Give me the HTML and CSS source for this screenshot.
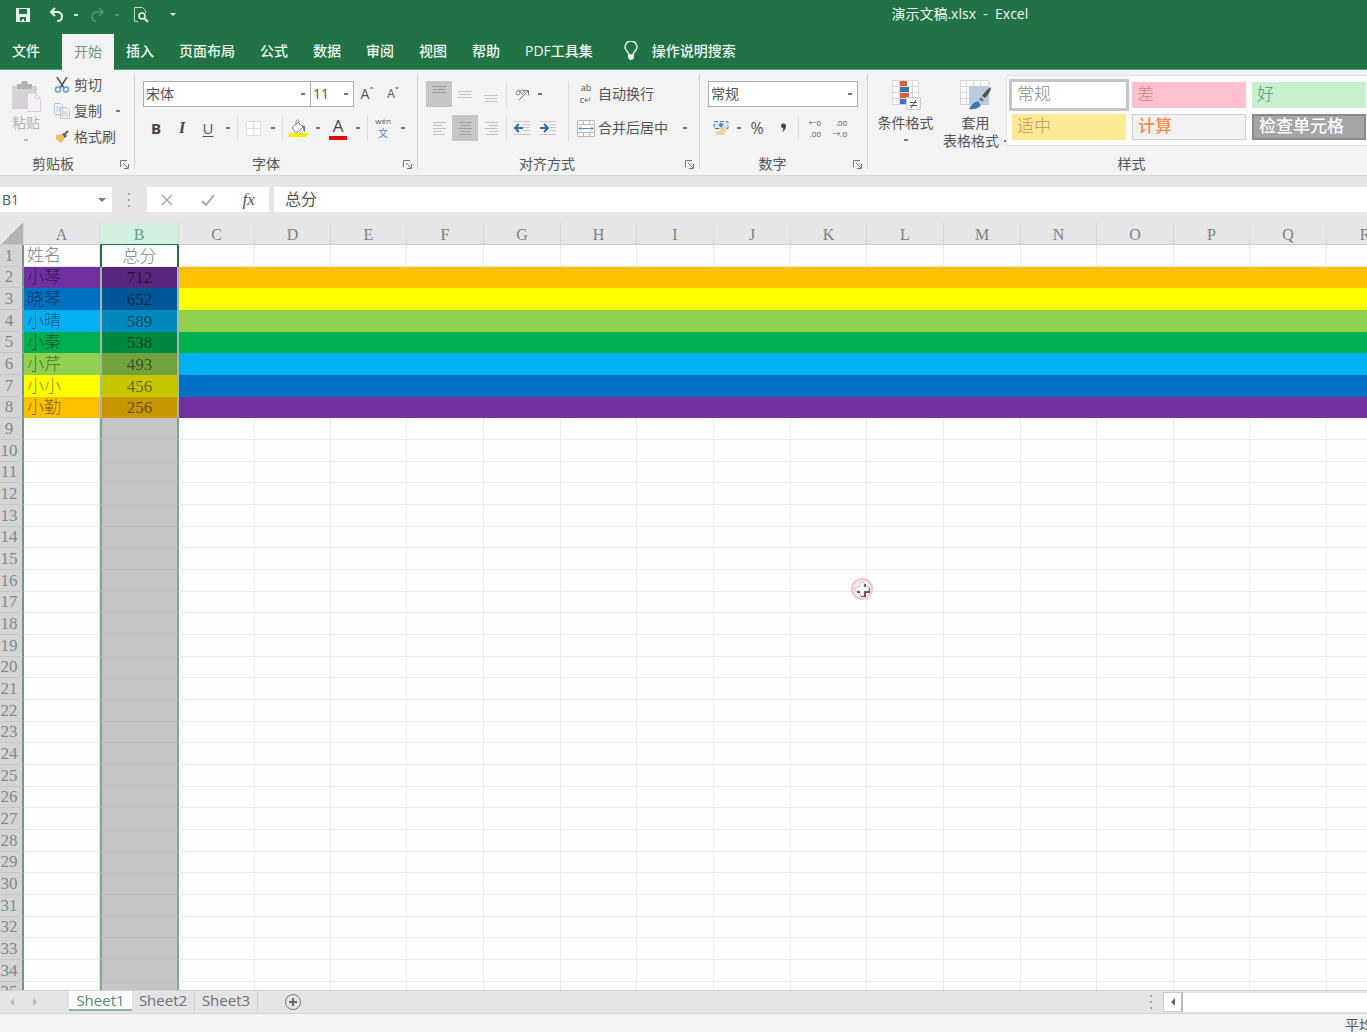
FILE: index.html
```html
<!DOCTYPE html>
<html lang="zh-CN">
<head>
<meta charset="utf-8">
<title>演示文稿.xlsx - Excel</title>
<link rel="stylesheet" href="styles.css">
</head>
<body>
<header class="titlebar">
  <div class="quick">
    <button class="quick-btn" aria-label="保存"><svg width="14" height="14" viewBox="0 0 14 14"><path fill="#e8f3ec" fill-rule="evenodd" d="M0 0h14v14H0zM3 1v5h8V1zM4 9v4h2v-2h2v2h2V9z"/></svg></button>
    <button class="quick-btn wide" aria-label="撤消"><svg width="15" height="15" viewBox="0 0 15 15"><path fill="none" stroke="#e8f3ec" stroke-width="2" d="M6 1 2 5l4 4M2 5h6q5 0 5 4.500T8 14"/></svg><i class="caret light"></i></button>
    <button class="quick-btn wide faded" aria-label="恢复"><svg width="15" height="15" viewBox="0 0 15 15"><path fill="none" stroke="#e8f3ec" stroke-width="1.500" d="m9 1 4 4-4 4M13 5H7q-5 0-5 4.500T6 14"/></svg><i class="caret light"></i></button>
    <button class="quick-btn preview" aria-label="打印预览"><svg width="16" height="16" viewBox="0 0 16 16"><path fill="none" stroke="#b9d9c5" d="M5 14.500H1.500v-14h8l3 3V6"/><circle cx="9" cy="9" r="3" fill="none" stroke="#e8f3ec" stroke-width="1.500"/><path stroke="#e8f3ec" stroke-width="2" d="m11 11 4 4"/></svg></button>
    <button class="quick-btn preview" aria-label="自定义快速访问工具栏"><i class="caret light big"></i></button>
  </div>
  <div class="doc-name">演示文稿.xlsx&nbsp; -&nbsp; Excel</div>
</header>
<nav class="tabs">
  <a href="#" class="tab file">文件</a>
  <a href="#" class="tab active">开始</a>
  <a href="#" class="tab">插入</a>
  <a href="#" class="tab">页面布局</a>
  <a href="#" class="tab">公式</a>
  <a href="#" class="tab">数据</a>
  <a href="#" class="tab">审阅</a>
  <a href="#" class="tab">视图</a>
  <a href="#" class="tab">帮助</a>
  <a href="#" class="tab">PDF工具集</a>
  <a href="#" class="tab tell"><svg width="14" height="20" viewBox="0 0 14 20"><path fill="none" stroke="#e8f3ec" stroke-width="1.500" d="M5 14c0-3-4-4-4-8a6 6 0 0 1 12 0c0 4-4 5-4 8z"/><path fill="#e8f3ec" d="M4 14h6v3l-2 2H6l-2-2z"/></svg>操作说明搜索</a>
</nav>

<section class="ribbon" aria-label="开始">
  <div class="group clipboard">
    <div class="body">
      <button class="paste"><svg width="30" height="31" viewBox="0 0 30 31"><path fill="#d6d0d6" d="M1 5h25v23H1z"/><path fill="#b5b1b5" d="M6 3h4a3.500 3.500 0 0 1 7 0h4v5H6z"/><path fill="#f5eff6" stroke="#dccfe0" d="M16.500 12.500h8l5 5v13h-13z"/><path fill="none" stroke="#dccfe0" d="M24.500 12.500v5h5"/></svg><span>粘贴</span><i class="caret pale"></i></button>
      <div class="stack">
        <button class="line"><svg width="16" height="16" viewBox="0 0 16 16"><path stroke="#555" stroke-width="1.500" d="m3 0 7 11M13 0 6 11"/><circle cx="4" cy="12.500" r="2.500" fill="none" stroke="#6c9ac6" stroke-width="1.500"/><circle cx="12" cy="12.500" r="2.500" fill="none" stroke="#6c9ac6" stroke-width="1.500"/></svg>剪切</button>
        <button class="line"><svg width="16" height="16" viewBox="0 0 16 16"><path fill="#f2f6fb" stroke="#b4c9df" d="M.5.5h6l2 2v9h-8zM6.500 4.500h6l3 3v8h-9z"/><path stroke="#b4c9df" d="M2 4h4M2 6h4M2 8h4M8 9h5M8 11h6M8 13h6"/></svg>复制<i class="caret"></i></button>
        <button class="line"><svg width="16" height="16" viewBox="0 0 16 16"><path fill="#f0bd68" d="m2 6 6-1 3 4-4 5-5-4z"/><path fill="#5a5a5a" d="m8 5 2-1 3 3-2 2z"/><path stroke="#5a5a5a" stroke-width="2" d="m11 5 3-3"/></svg>格式刷</button>
      </div>
    </div>
    <div class="caption">剪贴板<button class="launch" aria-label="剪贴板设置"><svg width="9" height="9" viewBox="0 0 9 9"><path fill="none" stroke="#777" d="M.5 7V.5H7M3 3l5 5M8.500 4v4.500H4"/></svg></button></div>
  </div>

  <div class="group font">
    <div class="body rows">
      <div class="row">
        <label class="combo family"><select aria-label="字体"><option>宋体</option></select><i class="caret"></i></label>
        <label class="combo size"><select aria-label="字号"><option>11</option></select><i class="caret"></i></label>
        <button class="tool grow" aria-label="增大字号">A<sup>ˆ</sup></button>
        <button class="tool grow less" aria-label="减小字号">A<sup>ˇ</sup></button>
      </div>
      <div class="row">
        <button class="tool bold">B</button><button class="tool italic">I</button><button class="tool under">U</button><button class="drop" aria-label="下划线选项"><i class="caret"></i></button>
        <i class="sep"></i>
        <button class="tool" aria-label="边框"><svg width="15" height="15" viewBox="0 0 15 15"><path fill="#fff" stroke="#dcdcdc" d="M.5.5h14v14H.5zM7.500 0v15M0 7.500h15"/></svg></button><button class="drop" aria-label="边框选项"><i class="caret"></i></button>
        <i class="sep"></i>
        <button class="tool" aria-label="填充颜色"><svg width="18" height="19" viewBox="0 0 18 19"><path fill="#fff" stroke="#8d8d8d" d="m3 9 6-6 5 5-5 5H6z"/><path fill="none" stroke="#8d8d8d" d="M7 6V2q2-3 3 0v4"/><path fill="#5a83b5" d="m13 6 3 1v6q-2-1-2-4z"/><path fill="#f6f000" d="M0 14h18v4H0z"/></svg></button><button class="drop" aria-label="填充选项"><i class="caret"></i></button>
        <button class="tool ink" aria-label="字体颜色">A</button><button class="drop" aria-label="字体颜色选项"><i class="caret"></i></button>
        <i class="sep"></i>
        <button class="tool phonetic" aria-label="拼音"><small>wén</small><b>文</b></button><button class="drop" aria-label="拼音选项"><i class="caret"></i></button>
      </div>
    </div>
    <div class="caption">字体<button class="launch" aria-label="字体设置"><svg width="9" height="9" viewBox="0 0 9 9"><path fill="none" stroke="#777" d="M.5 7V.5H7M3 3l5 5M8.500 4v4.500H4"/></svg></button></div>
  </div>

  <div class="group align">
    <div class="body">
      <div class="rows left">
        <div class="row">
          <button class="tool on" aria-label="顶端对齐"><svg width="14" height="20" viewBox="0 0 14 20"><path stroke="#9b9b9b" stroke-width="1" d="M0 2.500h14M1 5.500h12M0 8.500h14"/></svg></button>
          <button class="tool" aria-label="垂直居中"><svg width="14" height="20" viewBox="0 0 14 20"><path stroke="#c4c4c4" d="M0 7.500h14M1 10.500h12M0 13.500h14"/></svg></button>
          <button class="tool" aria-label="底端对齐"><svg width="14" height="20" viewBox="0 0 14 20"><path stroke="#c4c4c4" d="M0 11.500h14M1 14.500h12M0 17.500h14"/></svg></button>
          <i class="sep"></i>
          <button class="tool" aria-label="方向"><svg width="16" height="16" viewBox="0 0 16 16"><path fill="none" stroke="#777" d="m5 14 9-9M10 4.500h4.500V9"/><circle cx="4" cy="7" r="2" fill="none" stroke="#888"/><path fill="none" stroke="#888" d="m4 3 5 6M6 5q4-3 4 2"/></svg></button><button class="drop slim" aria-label="方向选项"><i class="caret"></i></button>
        </div>
        <div class="row">
          <button class="tool" aria-label="左对齐"><svg width="13" height="14" viewBox="0 0 13 14"><path stroke="#c0c0c0" d="M0 1.500h13M0 4.500h9M0 7.500h13M0 10.500h9M0 13.500h12"/></svg></button>
          <button class="tool on" aria-label="居中"><svg width="13" height="14" viewBox="0 0 13 14"><path stroke="#a0a0a0" d="M0 1.500h13M2 4.500h9M0 7.500h13M2 10.500h9M0 13.500h13"/></svg></button>
          <button class="tool" aria-label="右对齐"><svg width="13" height="14" viewBox="0 0 13 14"><path stroke="#c0c0c0" d="M0 1.500h13M4 4.500h9M0 7.500h13M4 10.500h9M1 13.500h12"/></svg></button>
          <i class="sep"></i>
          <button class="tool" aria-label="减少缩进"><svg width="16" height="14" viewBox="0 0 16 14"><path stroke="#cfc3cb" d="M0 .5h16M9 3.500h7M9 6.500h7M9 9.500h7M0 13.500h16"/><path fill="none" stroke="#2f6fb0" stroke-width="2" d="M9 7H1m4-4L1 7l4 4"/></svg></button>
          <button class="tool" aria-label="增加缩进"><svg width="16" height="14" viewBox="0 0 16 14"><path stroke="#cfc3cb" d="M0 .5h16M10 3.500h6M10 6.500h6M10 9.500h6M0 13.500h16"/><path fill="none" stroke="#2f6fb0" stroke-width="2" d="M0 7h8M4 3l4 4-4 4"/></svg></button>
        </div>
      </div>
      <div class="rows right">
        <button class="line wrap"><span class="abc"><span>ab</span><span>c<em>↵</em></span></span>自动换行</button>
        <button class="line wrap"><svg width="18" height="17" viewBox="0 0 18 17"><path fill="#fff" stroke="#b9b9b9" d="M.5.5h17v16H.5zM0 4.500h18M0 12.500h18M6.500 0v4M12.500 0v4M6.500 13v4M12.500 13v4"/><path fill="none" stroke="#5c8fc4" d="M2 8.500h14M4 6.500l-2 2 2 2M14 6.500l2 2-2 2"/></svg>合并后居中<i class="caret"></i></button>
      </div>
    </div>
    <div class="caption">对齐方式<button class="launch" aria-label="对齐设置"><svg width="9" height="9" viewBox="0 0 9 9"><path fill="none" stroke="#777" d="M.5 7V.5H7M3 3l5 5M8.500 4v4.500H4"/></svg></button></div>
  </div>

  <div class="group number">
    <div class="body rows">
      <div class="row">
        <label class="combo format"><select aria-label="数字格式"><option>常规</option></select><i class="caret"></i></label>
      </div>
      <div class="row">
        <button class="tool" aria-label="会计格式"><svg width="16" height="16" viewBox="0 0 16 16"><path fill="#dbe8f5" stroke="#4a7cb5" stroke-dasharray="4 2" d="M1 1.500h14v7H1z"/><circle cx="8" cy="5" r="2" fill="#4a7cb5"/><ellipse cx="10" cy="9" rx="4" ry="2" fill="#f4cf95"/><ellipse cx="7" cy="13" rx="5" ry="2" fill="#f4cf95"/></svg></button><button class="drop slim" aria-label="会计格式选项"><i class="caret"></i></button>
        <button class="tool percent">%</button><button class="tool comma" aria-label="千位分隔"><svg width="7" height="11" viewBox="0 0 7 11"><path fill="#444" d="M1 3a2.500 2.500 0 0 1 5 0q0 4-4 6 2-2 1-4-2 0-2-2z"/></svg></button>
        <i class="sep"></i>
        <button class="tool decimals"><span><em>←</em>0</span><span>.00</span></button><button class="tool decimals"><span>.00</span><span><em>→</em>.0</span></button>
      </div>
    </div>
    <div class="caption">数字<button class="launch" aria-label="数字设置"><svg width="9" height="9" viewBox="0 0 9 9"><path fill="none" stroke="#777" d="M.5 7V.5H7M3 3l5 5M8.500 4v4.500H4"/></svg></button></div>
  </div>

  <div class="group styles">
    <div class="body">
      <button class="large"><svg width="30" height="30" viewBox="0 0 30 30"><path fill="#fff" stroke="#d6d6d6" d="M1.500.5h26v24h-26zM8.500 0v25M15.500 0v25M21.500 0v25M1 6.500h27M1 12.500h27M1 18.500h27"/><path fill="#d8603f" d="M9 1h7v5H9zM9 13h9v5H9z"/><path fill="#3a78a8" d="M9 7h9v5H9z"/><path fill="#4472c4" d="M9 19h6v5H9z"/><path fill="#fff" stroke="#ccc" d="M15.500 17.500h14v12h-14z"/><path stroke="#555" d="M19 22.500h7M19 25.500h7M25 20l-5 8"/></svg><span>条件格式</span><i class="caret"></i></button>
      <button class="large second"><svg width="32" height="30" viewBox="0 0 32 30"><path fill="#fff" stroke="#d6d6d6" d="M.5.5h28v24H.5zM6.500 0v25M13.500 0v25M20.500 0v25M0 6.500h29M0 12.500h29M0 18.500h29"/><path fill="#bccbe2" d="M9 6h20v19H9z"/><path fill="#555" d="M31 7q0 5-6 11l-3-2q5-7 9-9z"/><path fill="#777" d="m21 17 3 3-2 2-3-3z"/><path fill="#3a78b4" d="M9 29q3-6 9-8l3 4q-3 5-12 4z"/></svg><span>套用</span><span class="two">表格格式<i class="caret"></i></span></button>
      <div class="gallery">
        <button class="style normal">常规</button><button class="style bad">差</button><button class="style good">好</button>
        <button class="style neutral">适中</button><button class="style calc">计算</button><button class="style check">检查单元格</button>
      </div>
    </div>
    <div class="caption">样式</div>
  </div>
</section>

<section class="formula-bar">
  <label class="name-box"><input aria-label="名称框" value="B1"><i class="caret big"></i></label>
  <i class="grip"></i>
  <div class="fx-buttons">
    <button aria-label="取消"><svg width="12" height="12" viewBox="0 0 12 12"><path stroke="#a9a9a9" stroke-width="1.500" d="m1 1 10 10M11 1 1 11"/></svg></button>
    <button aria-label="输入"><svg width="14" height="12" viewBox="0 0 14 12"><path fill="none" stroke="#a9a9a9" stroke-width="2" d="m1 7 4 4 8-10"/></svg></button>
    <button class="fx">fx</button>
  </div>
  <input class="formula" aria-label="编辑栏" value="总分">
</section>

<main class="sheet">
  <table class="grid" id="grid"></table>
  <svg class="pointer" width="24" height="24" viewBox="0 0 24 24"><circle cx="12" cy="12" r="10" fill="#fdeeee" stroke="#f7c4c7" stroke-width="2"/><path fill="#555" d="M11 7h5v4h4v5h-4v4h-5v-4H7v-5h4z"/><path fill="#fff" stroke="#999" stroke-width=".5" d="M10 5h4v5h5v4h-5v5h-4v-5H5v-4h5z"/></svg>
</main>

<footer>
  <div class="sheet-bar">
    <div class="nav-arrows"><button aria-label="上一个"><i class="tri left"></i></button><button aria-label="下一个"><i class="tri right"></i></button></div>
    <a href="#" class="sheet-tab current">Sheet1</a>
    <a href="#" class="sheet-tab">Sheet2</a>
    <a href="#" class="sheet-tab">Sheet3</a>
    <button class="add" aria-label="新工作表"><svg width="18" height="18" viewBox="0 0 18 18"><circle cx="9" cy="9" r="7.500" fill="none" stroke="#777"/><path stroke="#666" stroke-width="2" d="M5 9h8M9 5v8"/></svg></button>
    <div class="scroll"><i class="grip"></i><button class="scroll-btn" aria-label="向左滚动"><i class="tri left dark"></i></button><div class="track"></div></div>
  </div>
  <div class="status"><span>平均值</span></div>
</footer>
<script src="grid.js"></script>
</body>
</html>
```
FILE: grid.js
```js
const columns = "ABCDEFGHIJKLMNOPQR".split("");
const rowCount = 35;
const people = [
  ["小琴", 712, "purple", "orange"],
  ["晓琴", 652, "blue", "yellow"],
  ["小晴", 589, "sky", "lime"],
  ["小秦", 538, "green", "green"],
  ["小芹", 493, "lime", "sky"],
  ["小小", 456, "yellow", "blue"],
  ["小勤", 256, "orange", "purple"]
];

function add(parent, tag, className, text) {
  const node = document.createElement(tag);
  if (className) node.className = className;
  if (text !== undefined) node.textContent = text;
  parent.appendChild(node);
  return node;
}

const grid = document.getElementById("grid");
const group = add(grid, "colgroup");
add(group, "col", "col-head");
columns.forEach(name => add(group, "col", "col-" + name));

const head = add(add(grid, "thead"), "tr");
add(head, "th", "corner");
columns.forEach(name => add(head, "th", name === "B" ? "selected" : "", name));

const body = add(grid, "tbody");
for (let r = 1; r <= rowCount; r++) {
  const row = add(body, "tr");
  add(row, "th", "", r);
  const person = people[r - 2];
  columns.forEach((name, c) => {
    let text = "";
    let style = c === 1 ? "b" : "";
    if (r === 1 && c < 2) text = ["姓名", "总分"][c];
    if (r === 1 && c === 1) style = "b anchor";
    if (person) {
      if (c < 2) text = person[c];
      style += " fill " + (c < 2 ? person[2] : person[3]);
    }
    add(row, "td", style.trim(), text);
  });
}
```
FILE: styles.css
```css
* { box-sizing: border-box; }
body {
  margin: 0; height: 100vh; overflow: hidden;
  display: flex; flex-direction: column;
  font: 14px/18px "Open Sans", "Noto Sans CJK SC", sans-serif;
  color: #555; background: #e6e6e8;
}
button, select, input { font: inherit; color: inherit; background: none; border: 0; padding: 0; margin: 0; border-radius: 0; outline: 0; }
button { display: flex; align-items: center; justify-content: center; white-space: nowrap; }
a { color: inherit; text-decoration: none; }
svg { flex: none; display: block; }
em { font-style: normal; color: #3d74ad; }

.caret { flex: none; width: 4px; height: 2px; background: #777; }
.caret.pale { background: #bbb; }
.caret.light { background: #d5e8dc; }
.caret.big { width: 0; height: 0; background: none; border: 4px solid transparent; border-top-color: #777; border-bottom: 0; }
.caret.light.big { border-width: 3px; border-top-color: #e8f3ec; border-bottom: 0; }
.sep { flex: none; width: 1px; height: 24px; margin: 0 2px; background: #dcdcdc; }
.grip { flex: none; width: 2px; height: 14px; background: repeating-linear-gradient(#aaa 0 2px, transparent 2px 6px); }

.titlebar { flex: none; height: 34px; background: #217346; color: #f0f7f2; display: flex; align-items: flex-start; justify-content: space-between; padding-left: 12px; }
.quick { display: flex; height: 29px; }
.quick-btn { width: 22px; margin-right: 14px; }
.quick-btn.wide { width: 30px; gap: 10px; margin-right: 11px; }
.quick-btn.preview { margin-right: 10px; }
.quick-btn.faded { opacity: .25; }
.doc-name { font-size: 14px; line-height: 27px; margin-right: 25%; white-space: nowrap; }
.tabs { flex: none; height: 36px; background: #217346; color: #f0f7f2; border-bottom: 1px solid #4ea277; display: flex; white-space: nowrap; font-weight: 500; }
.tab { display: flex; align-items: center; padding: 0 13px 0 12px; height: 34px; font-size: 14px; }
.tab.file { padding: 0 22px 0 12px; }
.tab.active { background: #f3f3f3; color: #6b9a7f; padding: 0 12px; height: 36px; font-weight: 400; }
.tab.tell { gap: 14px; padding-left: 18px; }

.ribbon { flex: none; height: 106px; background: #f3f3f3; border-bottom: 1px solid #d8d8d8; display: flex; overflow: hidden; padding-top: 4px; }
.group { flex: none; height: 95px; border-right: 1px solid #d0d0d0; display: flex; flex-direction: column; }
.body { flex: none; height: 81px; display: flex; padding-top: 7px; }
.caption { flex: none; height: 18px; line-height: 18px; text-align: center; position: relative; }
.launch { position: absolute; right: 5px; top: 5px; }
.clipboard { width: 135px; }
.clipboard .caption { padding-right: 28px; }
.font { width: 283px; }
.font .caption { padding-right: 20px; }
.align { width: 282px; }
.align .caption { padding-right: 23px; }
.number { width: 168px; }
.number .caption { padding-right: 22px; }
.styles { width: 528px; }

.paste { flex-direction: column; justify-content: flex-start; width: 52px; color: #b5b5b5; }
.paste span { line-height: 22px; }
.paste .caret { margin-top: 5px; }
.stack { display: flex; flex-direction: column; margin-top: -9px; }
.line { gap: 4px; height: 26px; justify-content: flex-start; padding-left: 2px; }
.line .caret { margin-left: 10px; }

.body.rows { padding-left: 8px; }
.rows { display: flex; flex-direction: column; gap: 8px; }
.row { display: flex; height: 26px; align-items: center; }
.tool { flex: none; width: 26px; height: 26px; }
.tool.on { background: #c6c6c6; }
.drop { flex: none; width: 14px; height: 26px; }
.drop.slim { width: 10px; }
.combo { display: flex; align-items: center; height: 26px; background: #fff; border: 1px solid #ababab; padding-right: 5px; }
.combo select { flex: 1; min-width: 0; appearance: none; padding-left: 2px; }
.family { width: 168px; }
.size { width: 44px; margin-left: -1px; }
.format { width: 150px; }
.grow { font-size: 14px; }
.grow.less { font-size: 12px; }
.grow sup { font-size: 10px; line-height: 10px; align-self: flex-start; margin-top: 6px; }
.bold { font-weight: 700; font-size: 15px; color: #444; }
.italic { font: italic 700 16px "Liberation Serif", serif; color: #444; }
.under { text-decoration: underline; text-underline-offset: 2px; font-size: 15px; }
.ink { font-size: 17px; line-height: 14px; color: #444; background: linear-gradient(#d90a10, #d90a10) center 21px / 18px 4px no-repeat; padding-bottom: 4px; }
.phonetic { flex-direction: column; }
.phonetic small { font-size: 8px; line-height: 11px; }
.phonetic b { font-size: 10px; line-height: 15px; font-weight: 500; color: #6a94c4; }
.align .left { width: 142px; padding-left: 8px; }
.right { border-left: 1px solid #dcdcdc; padding-left: 6px; height: 60px; margin-left: 8px; }
.wrap { height: 26px; gap: 3px; }
.abc { width: 18px; font-size: 9px; line-height: 12px; display: flex; flex-direction: column; align-items: center; }
.wrap .caret { margin-left: 12px; }
.percent { font-size: 16px; }
.decimals { font-size: 8px; line-height: 11px; flex-direction: column; align-items: flex-end; padding-right: 6px; }

.styles .body { padding-top: 1px; }
.large { flex-direction: column; justify-content: flex-start; width: 76px; padding-top: 5px; }
.large span { line-height: 18px; }
.large svg { margin-bottom: 4px; }
.large .caret { margin-top: 7px; }
.large.second { width: 63px; padding-left: 2px; }
.large .two { display: flex; align-items: center; gap: 5px; }
.large .two .caret { margin: 0; }
.gallery { flex: none; width: 389px; height: 71px; background: #fcfcfc; border: 1px solid #e0e0e0; display: grid; grid-template-columns: repeat(3, 114px); grid-template-rows: 26px 26px; gap: 6px; padding: 6px 5px; }
.style { justify-content: flex-start; padding-left: 5px; font: 17px/20px "Liberation Serif", "Noto Sans CJK SC", serif; font-weight: 300; }
.normal { background: #fff; color: #888; outline: 3px solid #c4c4c8; }
.bad { background: #ffc2cc; color: #c8808c; }
.good { background: #c6efce; color: #5c9468; }
.neutral { background: #ffe896; color: #bd9750; }
.calc { background: #f2f2f2; color: #fa8c4a; border: 1px solid #cfcfcf; font-weight: 500; }
.check { background: #a5a5a5; color: #fff; border: 2px solid #8a8a8a; font-weight: 500; }

.formula-bar { flex: none; height: 47px; padding: 11px 0; display: flex; align-items: stretch; }
.name-box { width: 112px; background: #fff; display: flex; align-items: center; padding: 0 6px 0 2px; }
.name-box input { flex: 1; min-width: 0; }
.formula-bar .grip { margin: 6px 17px 0 16px; }
.fx-buttons { width: 122px; background: #fff; display: flex; }
.fx-buttons button { width: 41px; }
.fx-buttons .fx { font: italic 17px "Liberation Serif", serif; }
.formula { flex: 1; min-width: 0; background: #fff; margin-left: 5px; padding: 0 0 2px 11px; font-size: 16px; }

.sheet { flex: 1; min-height: 0; overflow: hidden; position: relative; background: #fefefe; }
.grid { table-layout: fixed; width: 1404px; border-collapse: separate; border-spacing: 0; font: 17px/21px "Liberation Serif", "Noto Sans CJK SC", serif; font-weight: 300; color: #808080; }
.col-head { width: 24px; }
col { width: 77px; }
.col-A, .col-C, .col-D, .col-E, .col-H, .col-K, .col-N, .col-P { width: 76px; }
.col-B { width: 79px; }
.grid th, .grid td { padding: 0; height: 22px; line-height: 21px; overflow: hidden; white-space: nowrap; font-weight: 300; }
.grid tbody tr:nth-child(3n+2) > * { height: 21px; line-height: 20px; }
.grid thead th { background: #e6e6e8; border-right: 1px solid #d6d6d8; border-bottom: 1px solid #c8c8c8; font-size: 16px; line-height: 19px; padding-top: 2px; }
.grid thead .selected { background: #d2f0df; color: #6b9a7f; border-bottom: 1px solid #217346; }
.grid thead .corner { background: linear-gradient(135deg, #e6e6e8 50%, #b4b4b4 50%); }
.grid tbody th { background: #d4d4d6; color: #7d8d86; border-right: 2px solid #6d9a82; border-bottom: 1px solid #c4c4c6; text-align: center; padding-right: 4px; }
.grid td { border-right: 1px solid #ebebee; border-bottom: 1px solid #ebebee; padding-left: 3px; }
.grid .b { background: #c7c4c7; border-left: 2px solid #7aa68d; border-right: 2px solid #7aa68d; border-bottom-color: #c0bdc1; text-align: center; padding: 0; }
.grid .anchor { background: #fff; border-color: #217346; border-bottom: 0; }
.grid .fill { border-bottom: 0; color: rgba(0, 0, 0, .5); }
.grid .fill:not(.b) { border-right: 0; }
.grid .b.fill { background-image: linear-gradient(rgba(0, 0, 0, .22), rgba(0, 0, 0, .22)); border-color: #9fb8a8; }
.grid .purple { background-color: #7030a0; }
.grid .blue { background-color: #0070c0; }
.grid .sky { background-color: #00b0f0; }
.grid .green { background-color: #00b050; }
.grid .lime { background-color: #92d050; }
.grid .yellow { background-color: #ff0; }
.grid .orange { background-color: #ffc000; }
.pointer { position: absolute; left: 850px; top: 354px; }

footer { flex: none; }
.sheet-bar { height: 24px; background: #e4e4e6; border-top: 1px solid #cfcfcf; border-bottom: 1px solid #d4d4d4; display: flex; align-items: center; }
.nav-arrows { display: flex; width: 69px; padding-left: 1px; }
.nav-arrows button { width: 22px; height: 20px; }
.tri { width: 0; height: 0; border: 4px solid transparent; }
.tri.left { border-right-color: #bbb; border-left: 0; }
.tri.right { border-left-color: #bbb; border-right: 0; }
.tri.left.dark { border-right-color: #666; }
.sheet-tab { width: 63px; height: 20px; line-height: 19px; font-size: 15px; text-align: center; border-right: 1px solid #cdcdcd; align-self: flex-start; color: #707070; }
.sheet-tab.current { background: #fff; color: #538a6b; border-right: 0; border-bottom: 2px solid #8bb59d; }
.add { width: 70px; }
.scroll { flex: 1; display: flex; align-items: center; justify-content: flex-end; height: 20px; }
.scroll .grip { margin-right: 11px; }
.scroll-btn { width: 20px; height: 20px; background: #fff; border: 1px solid #ccc; border-right: 2px solid #bbb; }
.track { width: 18%; max-width: 184px; flex: none; height: 19px; background: #fff; }
.status { height: 18px; background: #f3f3f3; display: flex; justify-content: flex-end; overflow: hidden; line-height: 22px; }
.status span { margin-right: -20px; white-space: nowrap; }
```
